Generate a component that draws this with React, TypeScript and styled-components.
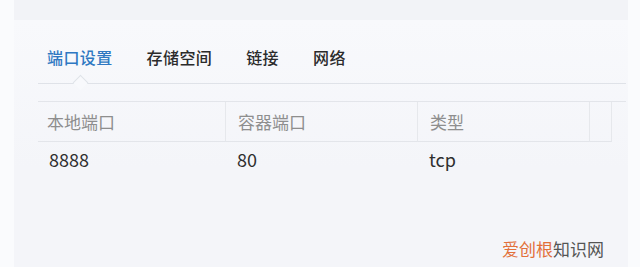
import styled, { createGlobalStyle } from "styled-components"

const GlobalStyle = createGlobalStyle`
  html, body {
    margin: 0;
    padding: 0;
    background: #fafbfd;
    font-family: "Noto Sans CJK SC", "Noto Sans", sans-serif;
  }
`

const Page = styled.div`
  width: 640px;
  height: 267px;
  padding: 0 12px 0 14px;
  box-sizing: border-box;
  display: flex;
  flex-direction: column;
  overflow: hidden;
`

const TopBand = styled.div`
  height: 20px;
  flex: none;
  background: #f2f3f7;
`

const Panel = styled.div`
  position: relative;
  flex: 1;
  padding: 26px 2px 0 24px;
  background: linear-gradient(#f8f9fc, #f4f5f9 60%);
`

const TabBar = styled.div`
  display: flex;
  gap: 34px;
  padding-left: 9px;
  border-bottom: 1px solid #dfe2e8;
`

const Tab = styled.div<{ $active?: boolean }>`
  position: relative;
  font-size: 16px;
  line-height: 22px;
  padding-bottom: 15px;
  letter-spacing: 0.4px;
  color: ${(p) => (p.$active ? "#2f78c2" : "#2b2b2b")};
  font-weight: 500;

  ${(p) =>
    p.$active &&
    `
    &::after {
      content: "";
      position: absolute;
      left: 50%;
      bottom: -5px;
      width: 10px;
      height: 10px;
      margin-left: -5px;
      background: #f8f9fc;
      border-left: 1px solid #dfe2e8;
      border-top: 1px solid #dfe2e8;
      transform: rotate(45deg);
    }
  `}
`

const Table = styled.div`
  margin-top: 17px;
  display: grid;
  grid-template-columns: 188px 192px 172px 22px;
  border-top: 1px solid #e3e5ea;
`

const HeadCell = styled.div`
  height: 39px;
  display: flex;
  align-items: center;
  padding-left: 12px;
  font-size: 17px;
  color: #8e8e8e;
  border-bottom: 1px solid #e3e5ea;
  border-right: 1px solid #e6e8ec;

  &:first-child {
    padding-left: 9px;
  }
  &:last-child {
    border-right: none;
  }
`

const Cell = styled.div`
  height: 33px;
  display: flex;
  align-items: center;
  padding-left: 11px;
  font-size: 18px;
  color: #2f2f2f;

  &:first-child {
    padding-left: 5px;
  }
`

const Watermark = styled.div`
  position: absolute;
  right: 24px;
  bottom: 8px;
  font-size: 17px;
  line-height: 20px;
  color: #555;
`

const Brand = styled.span`
  color: #e2703a;
`

const tabs = ["端口设置", "存储空间", "链接", "网络"]
const heads = ["本地端口", "容器端口", "类型", ""]
const row = ["8888", "80", "tcp", ""]

const App = () => {
  return (
    <>
      <GlobalStyle />
      <Page>
        <TopBand />
        <Panel>
          <TabBar>
            {tabs.map((t, i) => (
              <Tab key={t} $active={i === 0}>
                {t}
              </Tab>
            ))}
          </TabBar>
          <Table>
            {heads.map((h, i) => (
              <HeadCell key={"h" + i}>{h}</HeadCell>
            ))}
            {row.map((c, i) => (
              <Cell key={"c" + i}>{c}</Cell>
            ))}
          </Table>
          <Watermark>
            <Brand>爱创根</Brand>知识网
          </Watermark>
        </Panel>
      </Page>
    </>
  )
}

export default App
